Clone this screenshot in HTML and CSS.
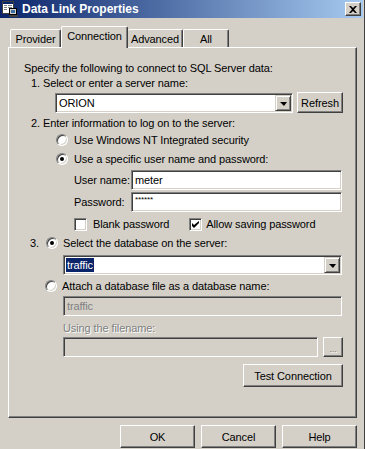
FILE: index.html
```html
<!DOCTYPE html>
<html lang="en">
<head>
  <meta charset="UTF-8">
  <title>Data Link Properties</title>
  <link rel="stylesheet" href="styles.css">
</head>
<body>
  <div class="window">
    <div class="titlebar">
      <svg class="app-icon" width="16" height="16" viewBox="0 0 16 16">
        <rect x="0.5" y="0.5" width="11" height="12" fill="#fff" stroke="#404040"/>
        <rect x="1" y="1" width="10" height="2" fill="#0a246a"/>
        <rect x="2" y="4" width="3" height="1" fill="#808080"/>
        <rect x="6" y="4" width="4" height="1" fill="#808080"/>
        <rect x="2" y="6" width="3" height="1" fill="#808080"/>
        <rect x="6" y="6" width="4" height="1" fill="#808080"/>
        <rect x="2" y="8" width="3" height="1" fill="#808080"/>
        <rect x="7.5" y="7.5" width="7" height="6" fill="#d4d0c8" stroke="#000"/>
        <rect x="9" y="9" width="4" height="3" fill="#3a6ea5"/>
        <rect x="7" y="14" width="9" height="2" fill="#404040"/>
      </svg>
      <span class="title">Data Link Properties</span>
      <div class="close-btn">
        <svg width="8" height="7" viewBox="0 0 8 7">
          <path d="M0 0h2l2 2 2-2h2L5 3.5 8 7H6L4 5 2 7H0l3-3.5z" fill="#000"/>
        </svg>
      </div>
    </div>

    <div class="tabs">
      <div class="tab tab-provider">Provider</div>
      <div class="tab tab-active">Connection</div>
      <div class="tab tab-advanced">Advanced</div>
      <div class="tab tab-all">All</div>
    </div>

    <div class="panel">
      <div class="intro">Specify the following to connect to SQL Server data:</div>
      <div class="step step-one">1. Select or enter a server name:</div>

      <div class="server-row">
        <div class="field combo server-combo">
          <span class="field-text">ORION</span>
          <span class="drop-btn"><span class="arrow"></span></span>
        </div>
        <div class="btn refresh-btn">Refresh</div>
      </div>

      <div class="step step-two">2. Enter information to log on to the server:</div>

      <div class="option option-nt">
        <span class="radio"></span>
        <span>Use Windows NT Integrated security</span>
      </div>
      <div class="option option-user">
        <span class="radio radio-on"></span>
        <span>Use a specific user name and password:</span>
      </div>

      <div class="login-row login-user">
        <span class="login-label">User name:</span>
        <div class="field login-field"><span class="field-text">meter</span></div>
      </div>
      <div class="login-row login-pass">
        <span class="login-label">Password:</span>
        <div class="field login-field"><span class="field-text stars">******</span></div>
      </div>

      <div class="checks">
        <div class="check-item">
          <span class="checkbox"></span>
          <span>Blank password</span>
        </div>
        <div class="check-item check-allow">
          <span class="checkbox">
            <svg width="7" height="7" viewBox="0 0 7 7">
              <path d="M0 2v3l2 2 5-5V-0L2 4z" fill="#000"/>
            </svg>
          </span>
          <span>Allow saving password</span>
        </div>
      </div>

      <div class="option option-db">
        <span class="step-num">3.</span>
        <span class="radio radio-on"></span>
        <span>Select the database on the server:</span>
      </div>

      <div class="field combo db-combo">
        <span class="field-text selected">traffic</span>
        <span class="drop-btn"><span class="arrow"></span></span>
      </div>

      <div class="option option-attach">
        <span class="radio"></span>
        <span>Attach a database file as a database name:</span>
      </div>

      <div class="field field-disabled attach-field"><span class="field-text">traffic</span></div>

      <div class="disabled-label">Using the filename:</div>

      <div class="file-row">
        <div class="field field-disabled file-field"></div>
        <div class="btn browse-btn">...</div>
      </div>

      <div class="test-row">
        <div class="btn test-btn">Test Connection</div>
      </div>
    </div>

    <div class="footer">
      <div class="btn footer-btn">OK</div>
      <div class="btn footer-btn">Cancel</div>
      <div class="btn footer-btn">Help</div>
    </div>
  </div>
</body>
</html>
```

FILE: styles.css
```css
* {
  box-sizing: border-box;
}

body {
  margin: 0;
  background-color: #d4d0c8;
  font-family: "Liberation Sans", Arial, sans-serif;
  font-size: 11px;
  letter-spacing: -0.1px;
  color: #000;
}

.window {
  width: 365px;
  height: 449px;
  overflow: hidden;
  background-color: #d4d0c8;
  border-right: 1px solid #404040;
}

/* title bar */
.titlebar {
  height: 18px;
  display: flex;
  align-items: center;
  padding-left: 2px;
  margin-right: 1px;
  background: linear-gradient(to right, #0a246a, #a6caf0);
}

.app-icon {
  margin-right: 4px;
}

.title {
  color: #fff;
  font-weight: bold;
  font-size: 12px;
  letter-spacing: 0;
}

.close-btn {
  margin-left: auto;
  margin-right: 2px;
  width: 16px;
  height: 14px;
  display: flex;
  align-items: center;
  justify-content: center;
  background-color: #d4d0c8;
  border: 1px solid;
  border-color: #fff #404040 #404040 #fff;
  box-shadow: inset -1px -1px #808080;
}

/* tabs */
.tabs {
  height: 29px;
  display: flex;
  align-items: flex-end;
  padding-left: 10px;
}

.tab {
  height: 18px;
  display: flex;
  align-items: center;
  justify-content: center;
  border-top: 1px solid #fff;
  border-left: 1px solid #fff;
  border-right: 1px solid #404040;
  border-radius: 2px 2px 0 0;
  box-shadow: inset -1px 0 #808080;
  padding-top: 1px;
}

.tab-provider { width: 51px; }
.tab-advanced { width: 55px; border-left: none; }
.tab-all { width: 46px; }

.tab-active {
  width: 67px;
  height: 22px;
  margin-bottom: -1px;
  position: relative;
  z-index: 1;
  background-color: #d4d0c8;
  padding-top: 0;
  padding-bottom: 4px;
}

/* tab panel */
.panel {
  margin-left: 8px;
  width: 349px;
  height: 371px;
  border-top: 1px solid #fff;
  border-left: 1px solid #fff;
  border-right: 1px solid #404040;
  border-bottom: 1px solid #404040;
  box-shadow: inset -1px -1px #808080;
  padding: 12px 12px 0 15px;
}

.intro {
  height: 16px;
  line-height: 16px;
}

.step {
  padding-left: 7px;
}

.step-one {
  height: 15px;
  line-height: 15px;
}

.step-two {
  height: 20px;
  line-height: 20px;
}

/* fields */
.field {
  height: 20px;
  display: flex;
  align-items: center;
  background-color: #fff;
  border: 1px solid;
  border-color: #808080 #fff #fff #808080;
  box-shadow: inset 1px 1px #404040, inset -1px -1px #d4d0c8;
  padding-left: 2px;
}

.field-text {
  padding-left: 1px;
}

.field-disabled {
  background-color: #d4d0c8;
  color: #808080;
}

.combo {
  padding-right: 1px;
}

.drop-btn {
  margin-left: auto;
  width: 16px;
  height: 16px;
  display: flex;
  align-items: center;
  justify-content: center;
  background-color: #d4d0c8;
  border: 1px solid;
  border-color: #d4d0c8 #404040 #404040 #d4d0c8;
  box-shadow: inset 1px 1px #fff, inset -1px -1px #808080;
}

.arrow {
  width: 0;
  height: 0;
  border-left: 4px solid transparent;
  border-right: 3px solid transparent;
  border-top: 4px solid #000;
  margin-top: 1px;
}

.selected {
  background-color: #0a246a;
  color: #fff;
  padding: 0 1px;
  line-height: 14px;
}

/* buttons */
.btn {
  display: flex;
  align-items: center;
  justify-content: center;
  background-color: #d4d0c8;
  border: 1px solid;
  border-color: #fff #404040 #404040 #fff;
  box-shadow: inset -1px -1px #808080;
}

.server-row {
  margin-top: 1px;
  height: 21px;
  display: flex;
  align-items: flex-end;
  padding-left: 31px;
}

.server-combo {
  width: 238px;
}

.refresh-btn {
  margin-left: 4px;
  width: 46px;
  height: 21px;
}

/* radio and checkbox options */
.option {
  height: 14px;
  display: flex;
  align-items: center;
}

.option-nt {
  padding-left: 32px;
}

.option-user {
  margin-top: 5px;
  padding-left: 32px;
}

.radio {
  width: 12px;
  height: 12px;
  flex-shrink: 0;
  margin-right: 6px;
  border-radius: 50%;
  background-color: #fff;
  border: 1px solid;
  border-color: #808080 #fff #fff #808080;
  box-shadow: inset 1px 1px #404040, inset -1px -1px #d4d0c8;
  display: flex;
  align-items: center;
  justify-content: center;
}

.radio-on::after {
  content: "";
  width: 4px;
  height: 4px;
  border-radius: 50%;
  background-color: #000;
}

.login-row {
  height: 20px;
  display: flex;
  align-items: center;
  padding-left: 50px;
}

.login-user {
  margin-top: 4px;
}

.login-pass {
  margin-top: 2px;
}

.login-label {
  width: 57px;
}

.login-field {
  width: 211px;
}

.stars {
  font-size: 8px;
  line-height: 8px;
  align-self: flex-start;
  margin-top: 3px;
}

.checks {
  margin-top: 5px;
  height: 14px;
  display: flex;
  align-items: center;
  padding-left: 50px;
}

.check-item {
  display: flex;
  align-items: center;
}

.check-allow {
  margin-left: 20px;
}

.checkbox {
  width: 13px;
  height: 13px;
  margin-right: 6px;
  background-color: #fff;
  border: 1px solid;
  border-color: #808080 #fff #fff #808080;
  box-shadow: inset 1px 1px #404040, inset -1px -1px #d4d0c8;
  display: flex;
  align-items: center;
  justify-content: center;
}

.check-allow .checkbox {
  margin-right: 4px;
}

.option-db {
  margin-top: 5px;
  padding-left: 6px;
}

.step-num {
  width: 16px;
}

.option-db .radio {
  margin-right: 5px;
}

.db-combo {
  margin-top: 5px;
  margin-left: 39px;
  width: 279px;
}

.option-attach {
  margin-top: 4px;
  padding-left: 21px;
}

.option-attach .radio {
  margin-right: 5px;
}

.attach-field {
  margin-top: 3px;
  margin-left: 39px;
  width: 279px;
}

.disabled-label {
  margin-top: 5px;
  margin-left: 39px;
  height: 14px;
  line-height: 14px;
  color: #808080;
  text-shadow: 1px 1px #fff;
}

.file-row {
  margin-top: 2px;
  margin-left: 39px;
  display: flex;
}

.file-field {
  width: 255px;
}

.browse-btn {
  margin-left: 5px;
  width: 20px;
  height: 20px;
  color: #808080;
  text-shadow: 1px 1px #fff;
  font-size: 9px;
  padding-top: 4px;
}

.test-row {
  margin-top: 7px;
  display: flex;
  padding-left: 219px;
}

.test-btn {
  width: 100px;
  height: 23px;
}

/* dialog buttons */
.footer {
  margin-top: 7px;
  display: flex;
  justify-content: flex-end;
  gap: 6px;
  padding-right: 7px;
}

.footer-btn {
  width: 75px;
  height: 23px;
}
```
